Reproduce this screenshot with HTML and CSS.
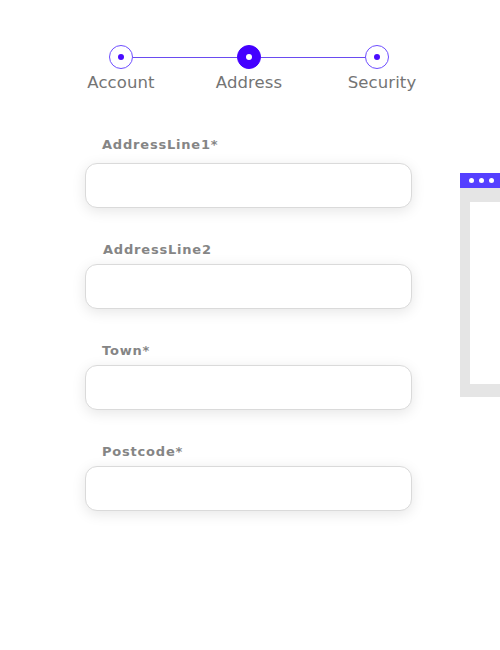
FILE: index.html
```html
<!DOCTYPE html>
<html>
<head>
<meta charset="utf-8">
<link rel="stylesheet" href="styles.css">
</head>
<body>
<div class="page">
  <div class="main">
    <div class="stepper">
      <div class="track">
        <span class="dot"><span class="core"></span></span>
        <span class="line"></span>
        <span class="dot active"><span class="core"></span></span>
        <span class="line"></span>
        <span class="dot"><span class="core"></span></span>
      </div>
      <div class="step-labels">
        <span>Account</span>
        <span>Address</span>
        <span class="sec">Security</span>
      </div>
    </div>
    <form class="form">
      <div class="field first">
        <label class="label">AddressLine1*</label>
        <input class="input" type="text">
      </div>
      <div class="field">
        <label class="label l2">AddressLine2</label>
        <input class="input" type="text">
      </div>
      <div class="field">
        <label class="label">Town*</label>
        <input class="input" type="text">
      </div>
      <div class="field">
        <label class="label">Postcode*</label>
        <input class="input" type="text">
      </div>
    </form>
  </div>
  <div class="window">
    <div class="titlebar"><i></i><i></i><i></i></div>
    <div class="frame"><div class="screen"></div></div>
  </div>
</div>
</body>
</html>
```
FILE: styles.css
```css
html, body { margin: 0; padding: 0; background: #fff; }
body { width: 500px; height: 650px; overflow: hidden; font-family: "DejaVu Sans", sans-serif; }
.page { display: flex; align-items: flex-start; padding-left: 85px; }
.main { width: 327px; flex: none; }
.stepper { padding-top: 45px; }
.track { display: flex; align-items: center; margin-left: 24px; width: 280px; }
.dot { width: 22px; height: 22px; border: 1px solid #6d4dff; border-radius: 50%; display: flex; align-items: center; justify-content: center; flex: none; }
.dot .core { width: 6px; height: 6px; border-radius: 50%; background: #4a0dff; }
.dot.active { background: #4400ff; border-color: #4400ff; }
.dot.active .core { background: #fff; width: 6px; height: 6px; }
.line { flex: 1; height: 1px; background: #6a4cf0; }
.step-labels { display: grid; grid-template-columns: 128px 128px 128px; margin-left: -28px; margin-top: 4px; }
.step-labels span { text-align: center; font-size: 16.5px; color: #747474; line-height: 20px; letter-spacing: 0.1px; }
.step-labels .sec { padding-left: 10px; }
.form { margin-top: 44px; display: flex; flex-direction: column; gap: 34px; }
.field { display: flex; flex-direction: column; }
.label { font-weight: bold; font-size: 13px; letter-spacing: 0.8px; color: #858585; padding-left: 17px; line-height: 16px; margin-bottom: 6px; }
.field.first .label { margin-bottom: 10px; }
.label.l2 { padding-left: 18px; }
.input { box-sizing: border-box; width: 327px; height: 45px; border: 1px solid #dadada; border-radius: 12px; background: #fff; box-shadow: 0 3px 14px rgba(0,0,0,0.10); outline: none; margin: 0; padding: 0 14px; }
.window { margin-left: 48px; margin-top: 173px; width: 60px; flex: none; }
.titlebar { height: 15px; background: #5540ff; display: flex; align-items: center; gap: 5px; padding-left: 9px; }
.titlebar i { width: 5px; height: 5px; border-radius: 50%; background: #fff; display: block; }
.frame { background: #e5e5e5; padding: 14px 0 13px 10px; }
.screen { height: 182px; background: #fff; }
```
